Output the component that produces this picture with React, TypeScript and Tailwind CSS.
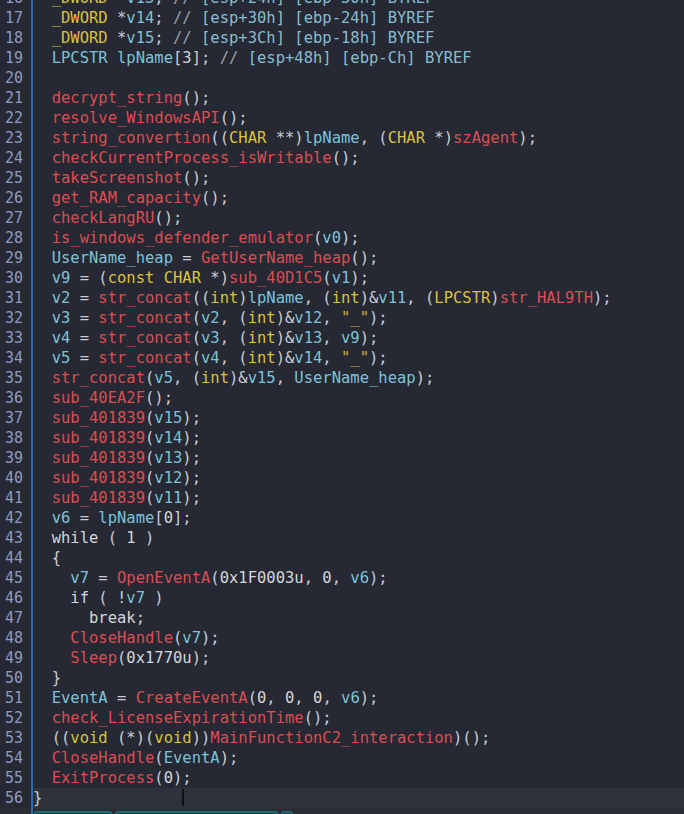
type Tok = [string, string];

const T = "text-[#d9c23e]"; // types
const V = "text-[#7cc3d8]"; // variables
const F = "text-[#dc4d52]"; // functions / globals
const P = "text-[#c9cdd6]"; // punctuation
const C = "text-[#86bdd2]"; // comment
const N = "text-[#d3d6dc]"; // numbers / keywords
const S = "text-[#d8b43e]"; // strings

const cmt = (s: string): Tok[] => [
  ["// ", "text-[#9aa0aa]"],
  [s, C],
];

const lines: [number, Tok[]][] = [
  [16, [["  ", P], ["_DWORD", T], [" *", P], ["v13", V], ["; ", P], ...cmt("[esp+24h] [ebp-30h] BYREF")]],
  [17, [["  ", P], ["_DWORD", T], [" *", P], ["v14", V], ["; ", P], ...cmt("[esp+30h] [ebp-24h] BYREF")]],
  [18, [["  ", P], ["_DWORD", T], [" *", P], ["v15", V], ["; ", P], ...cmt("[esp+3Ch] [ebp-18h] BYREF")]],
  [19, [["  ", P], ["LPCSTR", V], [" ", P], ["lpName", V], ["[", P], ["3", N], ["]; ", P], ...cmt("[esp+48h] [ebp-Ch] BYREF")]],
  [20, []],
  [21, [["  ", P], ["decrypt_string", F], ["();", P]]],
  [22, [["  ", P], ["resolve_WindowsAPI", F], ["();", P]]],
  [23, [["  ", P], ["string_convertion", F], ["((", P], ["CHAR", T], [" **)", P], ["lpName", V], [", (", P], ["CHAR", T], [" *)", P], ["szAgent", F], [");", P]]],
  [24, [["  ", P], ["checkCurrentProcess_isWritable", F], ["();", P]]],
  [25, [["  ", P], ["takeScreenshot", F], ["();", P]]],
  [26, [["  ", P], ["get_RAM_capacity", F], ["();", P]]],
  [27, [["  ", P], ["checkLangRU", F], ["();", P]]],
  [28, [["  ", P], ["is_windows_defender_emulator", F], ["(", P], ["v0", V], [");", P]]],
  [29, [["  ", P], ["UserName_heap", V], [" = ", P], ["GetUserName_heap", F], ["();", P]]],
  [30, [["  ", P], ["v9", V], [" = (", P], ["const CHAR", T], [" *)", P], ["sub_40D1C5", F], ["(", P], ["v1", V], [");", P]]],
  [31, [["  ", P], ["v2", V], [" = ", P], ["str_concat", F], ["((", P], ["int", T], [")", P], ["lpName", V], [", (", P], ["int", T], [")&", P], ["v11", V], [", (", P], ["LPCSTR", T], [")", P], ["str_HAL9TH", F], [");", P]]],
  [32, [["  ", P], ["v3", V], [" = ", P], ["str_concat", F], ["(", P], ["v2", V], [", (", P], ["int", T], [")&", P], ["v12", V], [", ", P], ['"_"', S], [");", P]]],
  [33, [["  ", P], ["v4", V], [" = ", P], ["str_concat", F], ["(", P], ["v3", V], [", (", P], ["int", T], [")&", P], ["v13", V], [", ", P], ["v9", V], [");", P]]],
  [34, [["  ", P], ["v5", V], [" = ", P], ["str_concat", F], ["(", P], ["v4", V], [", (", P], ["int", T], [")&", P], ["v14", V], [", ", P], ['"_"', S], [");", P]]],
  [35, [["  ", P], ["str_concat", F], ["(", P], ["v5", V], [", (", P], ["int", T], [")&", P], ["v15", V], [", ", P], ["UserName_heap", V], [");", P]]],
  [36, [["  ", P], ["sub_40EA2F", F], ["();", P]]],
  [37, [["  ", P], ["sub_401839", F], ["(", P], ["v15", V], [");", P]]],
  [38, [["  ", P], ["sub_401839", F], ["(", P], ["v14", V], [");", P]]],
  [39, [["  ", P], ["sub_401839", F], ["(", P], ["v13", V], [");", P]]],
  [40, [["  ", P], ["sub_401839", F], ["(", P], ["v12", V], [");", P]]],
  [41, [["  ", P], ["sub_401839", F], ["(", P], ["v11", V], [");", P]]],
  [42, [["  ", P], ["v6", V], [" = ", P], ["lpName", V], ["[", P], ["0", N], ["];", P]]],
  [43, [["  ", P], ["while", N], [" ( ", P], ["1", N], [" )", P]]],
  [44, [["  {", P]]],
  [45, [["    ", P], ["v7", V], [" = ", P], ["OpenEventA", F], ["(", P], ["0x1F0003u", N], [", ", P], ["0", N], [", ", P], ["v6", V], [");", P]]],
  [46, [["    ", P], ["if", N], [" ( !", P], ["v7", V], [" )", P]]],
  [47, [["      ", P], ["break", N], [";", P]]],
  [48, [["    ", P], ["CloseHandle", F], ["(", P], ["v7", V], [");", P]]],
  [49, [["    ", P], ["Sleep", F], ["(", P], ["0x1770u", N], [");", P]]],
  [50, [["  }", P]]],
  [51, [["  ", P], ["EventA", V], [" = ", P], ["CreateEventA", F], ["(", P], ["0", N], [", ", P], ["0", N], [", ", P], ["0", N], [", ", P], ["v6", V], [");", P]]],
  [52, [["  ", P], ["check_LicenseExpirationTime", F], ["();", P]]],
  [53, [["  ((", P], ["void", T], [" (*)(", P], ["void", T], ["))", P], ["MainFunctionC2_interaction", F], [")();", P]]],
  [54, [["  ", P], ["CloseHandle", F], ["(", P], ["EventA", V], [");", P]]],
  [55, [["  ", P], ["ExitProcess", F], ["(", P], ["0", N], [");", P]]],
  [56, [["}", P]]],
];

const App = () => {
  return (
    <div
      className="relative w-full h-[814px] overflow-hidden bg-[#262833] text-[15.5px] leading-5"
      style={{ fontFamily: '"DejaVu Sans Mono", "Liberation Mono", monospace' }}
    >
      <div className="h-[808px] overflow-hidden">
        <div className="-mt-[12px]">
          {lines.map(([num, toks]) => (
            <div key={num} className="flex h-5">
              <div className="w-[33px] shrink-0 pr-2 text-right text-[15px] text-[#8d9cc3] border-r-2 border-[#2c6db0]">
                {num}
              </div>
              <div className={`flex-1 whitespace-pre ${num === 56 ? "bg-[#2f313c]" : ""}`}>
                {toks.map(([txt, cls], i) => (
                  <span key={i} className={cls}>
                    {txt}
                  </span>
                ))}
              </div>
            </div>
          ))}
        </div>
      </div>

      {/* bottom tab strip */}
      <div className="flex h-[6px] bg-[#2b2d37]">
        <div className="w-[33px] border-r-2 border-[#2c6db0]" />
        <div className="flex gap-[3px] pt-[3px] pl-[1px]">
          <div className="w-[78px] border-t-2 border-x-2 border-[#1d6b74] rounded-t-[3px]" />
          <div className="w-[163px] border-t-2 border-x-2 border-[#1d6b74] rounded-t-[3px]" />
          <div className="w-[12px] border-t-2 border-x-2 border-[#1d6b74] rounded-t-[3px]" />
        </div>
      </div>

      {/* mouse I-beam */}
      <div className="absolute left-[182px] top-[789px] w-[2px] h-[17px] bg-[#101114]" />
    </div>
  );
};

export default App;
